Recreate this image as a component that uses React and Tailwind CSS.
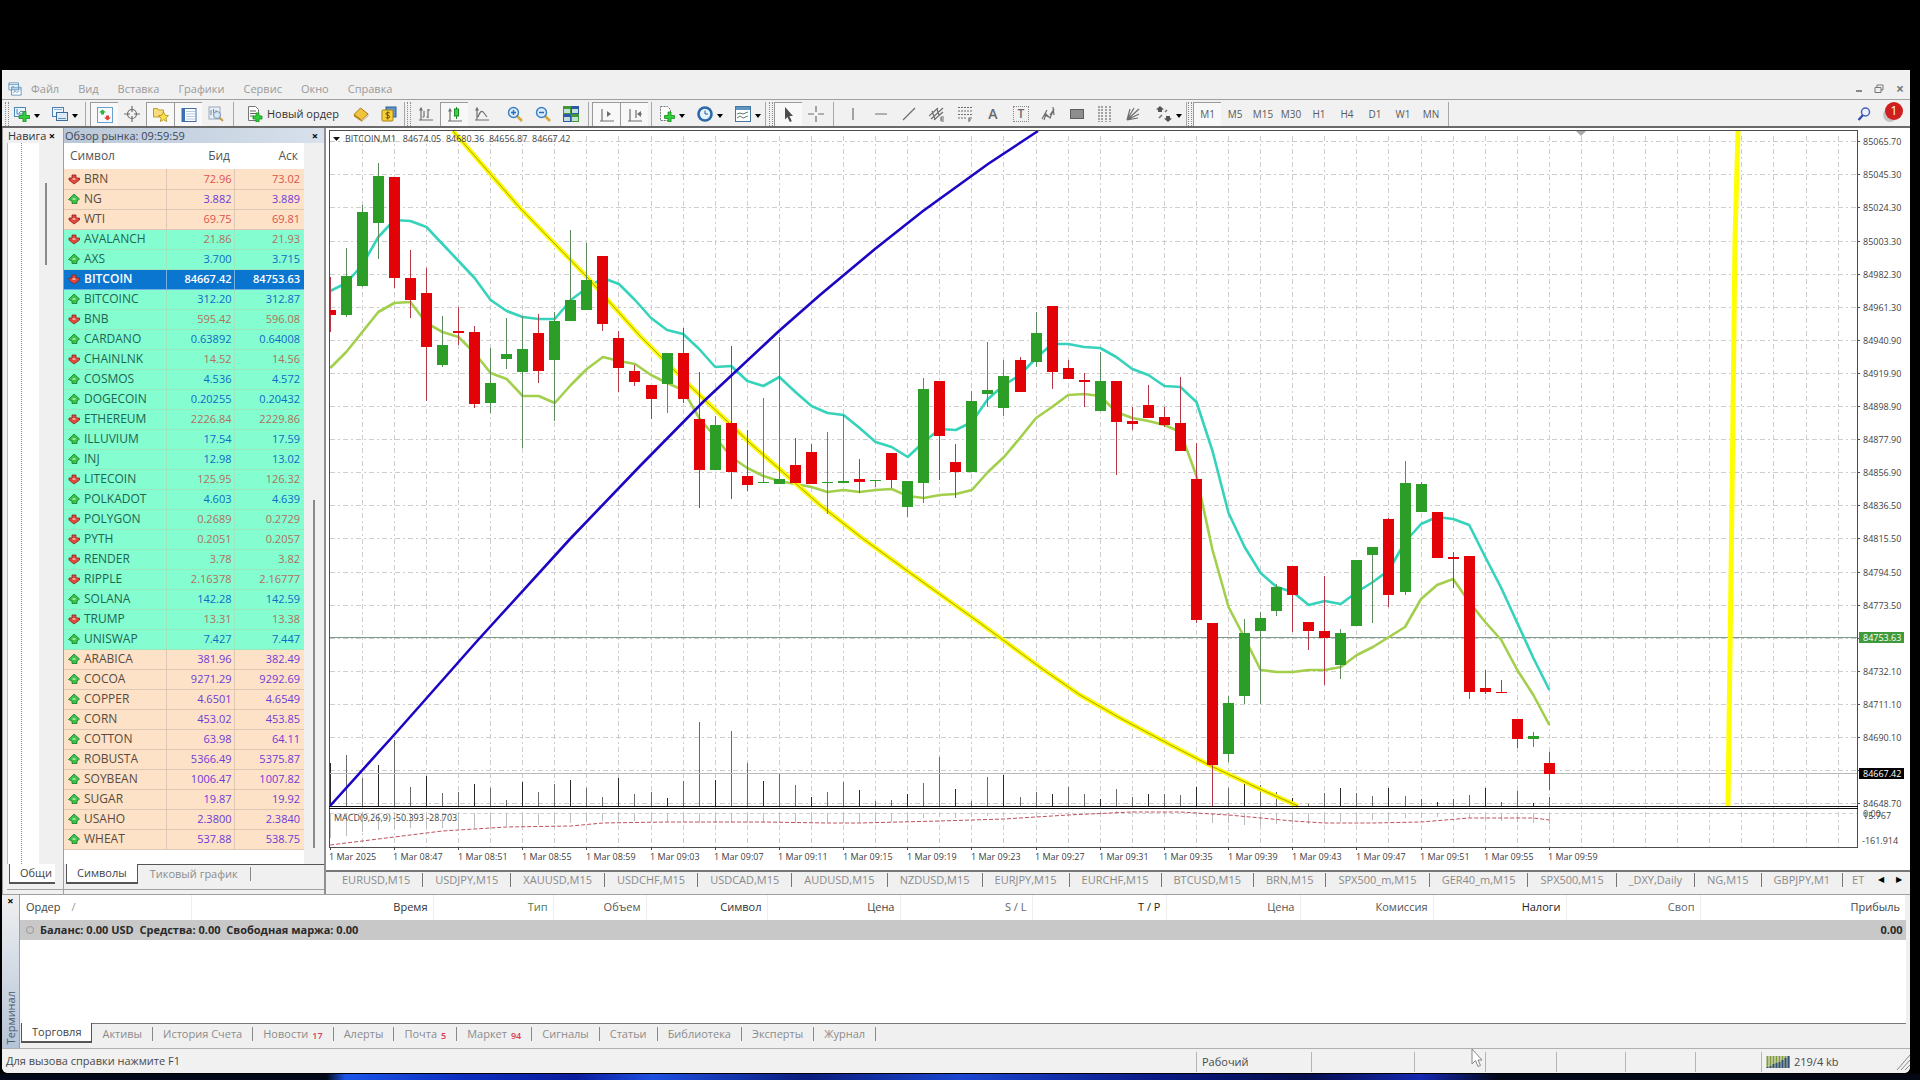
const menuItems = ['Файл', 'Вид', 'Вставка', 'Графики', 'Сервис', 'Окно', 'Справка'];

// name, bid, ask, direction, group
const symbols = [
    ['BRN', '72.96', '73.02', 'down', 'peach'],
    ['NG', '3.882', '3.889', 'up', 'peach'],
    ['WTI', '69.75', '69.81', 'down', 'peach'],
    ['AVALANCH', '21.86', '21.93', 'down', 'mint'],
    ['AXS', '3.700', '3.715', 'up', 'mint'],
    ['BITCOIN', '84667.42', '84753.63', 'down', 'active'],
    ['BITCOINC', '312.20', '312.87', 'up', 'mint'],
    ['BNB', '595.42', '596.08', 'down', 'mint'],
    ['CARDANO', '0.63892', '0.64008', 'up', 'mint'],
    ['CHAINLNK', '14.52', '14.56', 'down', 'mint'],
    ['COSMOS', '4.536', '4.572', 'up', 'mint'],
    ['DOGECOIN', '0.20255', '0.20432', 'up', 'mint'],
    ['ETHEREUM', '2226.84', '2229.86', 'down', 'mint'],
    ['ILLUVIUM', '17.54', '17.59', 'up', 'mint'],
    ['INJ', '12.98', '13.02', 'up', 'mint'],
    ['LITECOIN', '125.95', '126.32', 'down', 'mint'],
    ['POLKADOT', '4.603', '4.639', 'up', 'mint'],
    ['POLYGON', '0.2689', '0.2729', 'down', 'mint'],
    ['PYTH', '0.2051', '0.2057', 'down', 'mint'],
    ['RENDER', '3.78', '3.82', 'down', 'mint'],
    ['RIPPLE', '2.16378', '2.16777', 'down', 'mint'],
    ['SOLANA', '142.28', '142.59', 'up', 'mint'],
    ['TRUMP', '13.31', '13.38', 'down', 'mint'],
    ['UNISWAP', '7.427', '7.447', 'up', 'mint'],
    ['ARABICA', '381.96', '382.49', 'up', 'peach'],
    ['COCOA', '9271.29', '9292.69', 'up', 'peach'],
    ['COPPER', '4.6501', '4.6549', 'up', 'peach'],
    ['CORN', '453.02', '453.85', 'up', 'peach'],
    ['COTTON', '63.98', '64.11', 'up', 'peach'],
    ['ROBUSTA', '5366.49', '5375.87', 'up', 'peach'],
    ['SOYBEAN', '1006.47', '1007.82', 'up', 'peach'],
    ['SUGAR', '19.87', '19.92', 'up', 'peach'],
    ['USAHO', '2.3800', '2.3840', 'up', 'peach'],
    ['WHEAT', '537.88', '538.75', 'up', 'peach'],
];

const rowStyles = {
    peach: { row: 'bg-[#fde2c8] text-[#5a4a3c]', cell: 'border-[#dcc8b4]', up: 'text-[#6d3bd6]', down: 'text-[#e0524e]' },
    mint: { row: 'bg-[#84fdd0] text-[#1d6650]', cell: 'border-[#9be6bd]', up: 'text-[#1169c8]', down: 'text-[#b2705c]' },
    active: { row: 'bg-[#0b76d0] text-white', cell: 'border-[#6fb0e6]', up: 'text-white', down: 'text-white' },
};

const chartTabs = [
    'EURUSD,M15', 'USDJPY,M15', 'XAUUSD,M15', 'USDCHF,M15', 'USDCAD,M15', 'AUDUSD,M15', 'NZDUSD,M15', 'EURJPY,M15',
    'EURCHF,M15', 'BTCUSD,M15', 'BRN,M15', 'SPX500_m,M15', 'GER40_m,M15', 'SPX500,M15', '_DXY,Daily', 'NG,M15', 'GBPJPY,M1',
];

const orderColumns = [
    ['Время', 'w-[242px]', 'text-[#333]'],
    ['Тип', 'w-[120px]', 'text-[#4a7a50]'],
    ['Объем', 'w-[93px]', 'text-[#555]'],
    ['Символ', 'w-[121px]', 'text-[#333]'],
    ['Цена', 'w-[133px]', 'text-[#444]'],
    ['S / L', 'w-[132px]', 'text-[#666]'],
    ['T / P', 'w-[134px]', 'text-[#222]'],
    ['Цена', 'w-[134px]', 'text-[#555]'],
    ['Комиссия', 'w-[133px]', 'text-[#555]'],
    ['Налоги', 'w-[133px]', 'text-[#222]'],
    ['Своп', 'w-[134px]', 'text-[#666]'],
    ['Прибыль', '', 'text-[#444]'],
];

const terminalTabs = [
    ['Активы'], ['История Счета'], ['Новости', '17'], ['Алерты'], ['Почта', '5'], ['Маркет', '94'],
    ['Сигналы'], ['Статьи'], ['Библиотека'], ['Эксперты'], ['Журнал'],
];

const timeframes = ['M1', 'M5', 'M15', 'M30', 'H1', 'H4', 'D1', 'W1', 'MN'];

// direction, high, body top, body bottom, low
const candles = [
    ['r', 277, 310, 315, 332], ['g', 248, 276, 315, 317], ['g', 205, 212, 286, 287], ['g', 163, 176, 223, 259],
    ['r', 177, 177, 278, 288], ['r', 250, 278, 300, 318], ['r', 268, 293, 347, 401], ['g', 316, 345, 365, 367],
    ['r', 307, 331, 333, 345], ['r', 326, 332, 404, 408], ['g', 348, 383, 403, 413], ['g', 318, 354, 359, 369],
    ['g', 316, 349, 372, 448], ['r', 314, 333, 371, 383], ['g', 312, 321, 360, 421], ['g', 230, 300, 321, 321],
    ['g', 243, 280, 310, 310], ['r', 256, 256, 324, 331], ['r', 331, 338, 368, 392], ['r', 365, 371, 382, 386],
    ['r', 385, 385, 399, 419], ['g', 353, 353, 384, 413], ['r', 328, 353, 399, 403], ['r', 372, 419, 470, 508],
    ['g', 416, 425, 470, 470], ['r', 346, 423, 472, 499], ['r', 430, 476, 485, 491], ['g', 398, 482, 483, 483],
    ['g', 337, 479, 484, 484], ['r', 438, 465, 483, 483], ['r', 444, 452, 484, 484], ['g', 432, 482, 483, 514],
    ['g', 415, 481, 483, 483], ['r', 459, 479, 482, 493], ['g', 480, 480, 481, 487], ['r', 453, 453, 480, 488],
    ['g', 481, 481, 507, 517], ['g', 378, 389, 483, 503], ['r', 381, 381, 436, 480], ['r', 444, 462, 472, 498],
    ['g', 391, 401, 472, 472], ['g', 342, 390, 394, 407], ['g', 360, 376, 408, 416], ['r', 357, 360, 392, 392],
    ['g', 312, 333, 362, 367], ['r', 306, 306, 372, 389], ['r', 360, 368, 379, 379], ['r', 373, 380, 382, 407],
    ['g', 352, 381, 411, 411], ['r', 381, 381, 422, 475], ['r', 407, 421, 424, 430], ['r', 385, 405, 418, 418],
    ['r', 407, 417, 425, 427], ['r', 377, 423, 451, 451], ['r', 443, 479, 620, 623], ['r', 623, 623, 765, 806],
    ['g', 696, 703, 754, 762], ['g', 619, 633, 696, 704], ['g', 612, 618, 631, 704], ['g', 584, 587, 611, 616],
    ['r', 566, 566, 595, 632], ['r', 622, 622, 631, 650], ['r', 576, 631, 638, 685], ['g', 629, 633, 665, 679],
    ['g', 560, 560, 626, 626], ['g', 547, 547, 555, 623], ['r', 518, 519, 595, 607], ['g', 461, 483, 592, 595],
    ['g', 482, 484, 512, 512], ['r', 512, 512, 558, 558], ['r', 552, 557, 559, 588], ['r', 556, 556, 692, 699],
    ['r', 670, 688, 692, 694], ['r', 680, 692, 693, 693], ['r', 719, 719, 739, 748], ['g', 732, 736, 739, 747],
    ['r', 752, 763, 774, 790],
];

const fastAverage = [
    291, 283, 265, 237, 220, 221, 227, 244, 261, 278, 300, 311, 317, 319, 319, 300, 288, 278, 284, 300, 318, 330, 334, 349, 367, 366,
    381, 386, 377, 392, 406, 413, 415, 428, 442, 447, 457, 442, 429, 430, 422, 399, 385, 375, 358, 344, 344, 347, 348, 357, 369, 375,
    386, 387, 402, 451, 513, 547, 573, 587, 592, 605, 601, 604, 592, 582, 570, 542, 524, 517, 519, 525, 557, 588, 623, 658, 690,
];

const slowAverage = [
    368, 352, 332, 312, 303, 302, 323, 332, 337, 353, 373, 379, 396, 396, 403, 385, 369, 357, 361, 364, 375, 383, 390, 418, 437, 457,
    468, 476, 481, 484, 487, 492, 490, 492, 490, 489, 496, 498, 495, 494, 490, 472, 457, 438, 418, 407, 395, 394, 396, 412, 418, 421,
    425, 432, 476, 550, 607, 638, 670, 672, 672, 670, 670, 667, 655, 647, 637, 627, 599, 585, 579, 602, 622, 640, 670, 695, 725,
];

const volumes = [
    763, 755, 778, 765, 740, 787, 776, 793, 792, 784, 788, 800, 782, 792, 784, 780, 788, 797, 778, 794, 792, 798, 781, 722, 780, 731,
    763, 781, 773, 785, 797, 792, 782, 790, 801, 800, 794, 783, 757, 789, 801, 777, 775, 797, 792, 794, 787, 794, 799, 789, 797, 794,
    794, 795, 787, 766, 788, 782, 785, 792, 798, 804, 793, 788, 793, 796, 788, 796, 799, 802, 799, 795, 788, 802, 791, 803, 797,
];

const macdBars = [
    838, 836, 832, 830, 829, 828, 828, 828, 828, 828, 827, 826, 825, 825, 824, 823, 822, 821, 821, 821, 822, 822, 822, 823, 823, 823,
    823, 823, 823, 823, 823, 823, 823, 823, 822, 822, 820, 818, 817, 818, 817, 816, 815, 814, 814, 814, 812, 812, 811, 811, 811, 812,
    812, 813, 815, 823, 823, 825, 825, 824, 824, 824, 823, 822, 821, 820, 820, 818, 818, 817, 817, 818, 820, 821, 822, 823, 824,
];

const macdSignal = [
    [0, 845], [2, 841], [4, 837], [7, 831], [11, 827], [15, 826], [17, 823], [21, 822], [27, 822], [31, 823], [33, 823], [38, 821],
    [42, 819], [46, 815], [50, 812], [53, 812], [56, 815], [58, 818], [60, 821], [62, 823], [65, 823], [68, 822], [71, 818], [75, 818], [76, 820],
];

const priceLabels = [
    '85065.70', '85045.30', '85024.30', '85003.30', '84982.30', '84961.30', '84940.90', '84919.90', '84898.90', '84877.90', '84856.90',
    '84836.50', '84815.50', '84794.50', '84773.50', null, '84732.10', '84711.10', '84690.10', null, '84648.70',
];

const barX = (i) => 330.2 + i * 16.042;
const gridY = (i) => Math.round(141.2 + i * 33.1) + 0.5;
const toPoints = (values) => values.map((y, i) => `${barX(i)},${y}`).join(' ');

const timeLabels = Array.from({ length: 20 }, (_, i) => {
    if (i === 0) return '1 Mar 2025';
    const minutes = 8 * 60 + 43 + i * 4;
    return `1 Mar 0${Math.floor(minutes / 60)}:${String(minutes % 60).padStart(2, '0')}`;
});

const yellowCurve = '453,131 520,208 587,277 640,336 687,383 750,443 820,505 862,538 920,580 980,623 1041,668 1080,695 1120,718 1165,742 1213,767 1260,789 1298,806';
const blueCurve = '330,806 394,735 478,640 570,539 640,466 703,402 779,331 820,295 875,249 923,211 988,164 1038,131';

function Chart() {
    return (
        <svg viewBox="326 128 1584 742" className="block w-full h-auto bg-white font-['Open_Sans','Noto_Sans',sans-serif] text-[9px]">
            <g stroke="#cdcdcd" strokeWidth="1" strokeDasharray="5 3 2 3" shapeRendering="crispEdges">
                {priceLabels.map((_, i) => <line key={i} x1="330" x2="1857" y1={gridY(i)} y2={gridY(i)} />)}
                {Array.from({ length: 47 }, (_, i) => (
                    <line key={i} x1={barX(2 + i * 2)} x2={barX(2 + i * 2)} y1="136" y2="847" />
                ))}
            </g>
            <line x1="330" x2="1857" y1="813.5" y2="813.5" stroke="#d2d2d2" strokeDasharray="4 3" />

            <g shapeRendering="crispEdges">
                {volumes.map((y, i) => (
                    <line key={i} x1={barX(i)} x2={barX(i)} y1={y} y2="806" stroke={i % 3 ? '#6a6a6a' : '#2c2c2c'} />
                ))}
                {macdBars.map((y, i) => <line key={i} x1={barX(i)} x2={barX(i)} y1="813" y2={y} stroke="#bdbdbd" />)}
            </g>
            <polyline points={macdSignal.map(([i, y]) => `${barX(i)},${y}`).join(' ')} fill="none" stroke="#c0505e" strokeDasharray="4 2" />

            <line x1="330" x2="1857" y1="637.5" y2="637.5" stroke="#7f9a86" shapeRendering="crispEdges" />
            <line x1="330" x2="1857" y1="773.5" y2="773.5" stroke="#b9b9b9" shapeRendering="crispEdges" />

            <polyline points={toPoints(slowAverage)} fill="none" stroke="#a2cf4c" strokeWidth="2.6" strokeLinejoin="round" />
            <polyline points={toPoints(fastAverage)} fill="none" stroke="#35d3bb" strokeWidth="2.6" strokeLinejoin="round" />
            <polyline points={yellowCurve} fill="none" stroke="#fbfb00" strokeWidth="4.5" />
            <polyline points={yellowCurve} fill="none" stroke="#9a8a00" strokeWidth="0.8" />

            {candles.map(([dir, high, top, bottom, low], i) => (
                <g key={i} shapeRendering="crispEdges">
                    <line x1={barX(i)} x2={barX(i)} y1={high} y2={low} stroke={dir === 'g' ? '#5c8a5c' : '#b03a48'} />
                    <rect
                        x={i === 0 ? 330 : Math.round(barX(i) - 5.5)}
                        y={top}
                        width={i === 0 ? 6 : 11}
                        height={bottom - top}
                        fill={dir === 'g' ? '#2c9e28' : '#e30208'}
                    />
                </g>
            ))}

            <polyline points={blueCurve} fill="none" stroke="#1c06c4" strokeWidth="2.6" />
            <polyline points="1738,131 1735,240 1732,500 1728,806" fill="none" stroke="#ffff00" strokeWidth="5" />
            <path d="M1576 131h10l-5 5z" fill="#a9a9a9" />

            {/* frame */}
            <g stroke="#4d4d4d" fill="none" shapeRendering="crispEdges">
                <path d="M329.5 847V130.5H1857.5V848" />
                <path d="M329 847.5H1858" />
                <path d="M329 806.5H1858M329 808.5H1858" stroke="#111" />
                {timeLabels.map((_, i) => <line key={i} x1={barX(i * 4)} x2={barX(i * 4)} y1="847" y2="850" />)}
                {priceLabels.map((_, i) => <line key={i} x1="1857" x2="1860" y1={gridY(i)} y2={gridY(i)} />)}
            </g>

            <g fill="#3f3f3f">
                <path d="M333 137h7l-3.500 4z" fill="#111" />
                <text x="345" y="142">BITCOIN,M1&#160;&#160; 84674.05&#160; 84680.36&#160; 84656.87&#160; 84667.42</text>
                <text x="334" y="821">MACD(9,26,9) -50.393 -28.703</text>
                {timeLabels.map((label, i) => <text key={label} x={Math.round(barX(i * 4)) - 1} y="860">{label}</text>)}
                {priceLabels.map((label, i) => label && <text key={label} x="1863" y={gridY(i) + 3.5}>{label}</text>)}
                <text x="1863" y="817">0.00</text>
                <text x="1863" y="819">15.767</text>
                <text x="1862" y="844">-161.914</text>
            </g>
            <rect x="1859" y="632" width="45" height="11" fill="#3f9a3c" />
            <rect x="1859" y="768" width="45" height="11" fill="#000" />
            <g fill="#fff">
                <text x="1863" y="641">84753.63</text>
                <text x="1863" y="777">84667.42</text>
            </g>
        </svg>
    );
}

const glyph = { fill: 'none', stroke: '#6e6e6e', strokeWidth: 1.2 };

const icons = {
    newChart: (
        <>
            <rect x="0.500" y="1.500" width="11" height="9" fill="#eaf3fb" stroke="#4a86b8" />
            <path d="M3 3v5h6M5 7l2-2 2 1" fill="none" stroke="#4a86b8" />
            <path d="M9 5.500h3v4h4v3h-4v3.500H9v-3.500H5v-3h4z" fill="#2fd03a" stroke="#168a20" strokeWidth="0.8" />
        </>
    ),
    profiles: (
        <>
            <rect x="0.500" y="1.500" width="11" height="9" fill="#eef6fc" stroke="#4a7fb0" />
            <path d="M2 3.500h8" stroke="#8ab4d8" />
            <rect x="4.500" y="6.500" width="11" height="8" fill="#dcebf7" stroke="#3c6d9c" />
            <path d="M6 12.500h8" stroke="#5c8fbd" />
        </>
    ),
    market: (
        <>
            <rect x="0.500" y="0.500" width="15" height="15" fill="#f7fbff" stroke="#6aa0cc" />
            <path d="M5.500 2.500l3.500 3H7v2H4v-2H2z" fill="#2bb534" />
            <path d="M10.500 13.500l-3.500-3h2v-2h3v2h2z" fill="#e0402e" />
        </>
    ),
    crosshair: (
        <g {...glyph}>
            <circle cx="8" cy="8" r="4.500" />
            <path d="M8 0v6M8 10v6M0 8h6M10 8h6" />
        </g>
    ),
    navigator: (
        <>
            <path d="M0.500 1.500h4l1 1.500h5v7h-10z" fill="#f8dc7c" stroke="#c79a25" />
            <path d="M10.500 5l1.500 3.200 3.500.4-2.600 2.300.8 3.600-3.200-1.800-3.200 1.800.8-3.600L5.500 8.600l3.500-.4z" fill="#fbe34e" stroke="#b28e10" strokeWidth="0.8" />
        </>
    ),
    terminal: (
        <>
            <rect x="1" y="1.500" width="14" height="13" fill="#fff" stroke="#3e6fa5" />
            <rect x="1" y="1.500" width="3" height="13" fill="#3f6fae" />
            <path d="M5 4.500h9M5 7h9M5 9.500h9M5 12h9" stroke="#9dbfe0" strokeWidth="0.8" />
        </>
    ),
    tester: (
        <>
            <rect x="1" y="1" width="11" height="12" fill="#e8eff6" stroke="#9aaabb" />
            <path d="M3 4v5M5.500 3v4M8 4v6" stroke="#70859b" />
            <circle cx="9" cy="9" r="3.500" fill="#d5e6f5" stroke="#7893ad" />
            <path d="M11.500 11.500L15 15" stroke="#c2a14a" strokeWidth="2" />
        </>
    ),
    order: (
        <>
            <path d="M1.500.5h7l3 3v11h-10z" fill="#fff" stroke="#777" />
            <path d="M3 5h6M3 7.500h6M3 10h4" stroke="#666" />
            <path d="M9 7h3v3h3v3h-3v3H9v-3H6v-3h3z" fill="#2fd03a" stroke="#168a20" strokeWidth="0.8" />
        </>
    ),
    editor: (
        <>
            <path d="M1 8.500L7.500 2 15 8l-6.500 6z" fill="#f0c43c" stroke="#a9791a" />
            <path d="M1 8.500l7.500 5.500v1.500L1 10.500z" fill="#b98218" />
            <path d="M8.500 14L15 8v1.800l-6.500 5.700z" fill="#fff6d2" stroke="#a9791a" strokeWidth="0.6" />
        </>
    ),
    trading: (
        <>
            <rect x="5" y="1" width="10" height="10" fill="#5f93cf" stroke="#2e5d94" />
            <rect x="1" y="4" width="11" height="11" rx="1" fill="#f7d03a" stroke="#a98212" />
            <path d="M8.800 7c-1-1-4-.8-4 .9 0 1.800 4 1 4 2.800 0 1.600-3 1.800-4.200.6M6.700 5.500v8" fill="none" stroke="#6b5000" />
        </>
    ),
    bars: <path {...glyph} d="M3 3v11h12M3 14H1M3 2l-1 2h2zM6 5v6M6 11H4.500M10 3v9M10 4h2M10 11H8.500" />,
    candlesIcon: (
        <>
            <path {...glyph} d="M3 3v11h12M3 14H1M3 2l-1 2h2z" />
            <path d="M9.500 0v12" stroke="#1a8a24" />
            <rect x="7.500" y="2" width="4" height="7" fill="#3fd04a" stroke="#1a8a24" />
        </>
    ),
    line: <path {...glyph} d="M3 3v11h12M3 14H1M3 2l-1 2h2zM4 11c2-6 4-7 6-4l3 4" />,
    zoomIn: (
        <>
            <path d="M10 10l5 5" stroke="#d5ab35" strokeWidth="2.600" />
            <circle cx="6.500" cy="6.500" r="5" fill="#d9ecfb" stroke="#3a7fc4" strokeWidth="1.400" />
            <path d="M4 6.500h5M6.500 4v5" stroke="#2b6cb0" strokeWidth="1.400" />
        </>
    ),
    zoomOut: (
        <>
            <path d="M10 10l5 5" stroke="#d5ab35" strokeWidth="2.600" />
            <circle cx="6.500" cy="6.500" r="5" fill="#d9ecfb" stroke="#3a7fc4" strokeWidth="1.400" />
            <path d="M4 6.500h5" stroke="#2b6cb0" strokeWidth="1.400" />
        </>
    ),
    tile: (
        <>
            <path d="M0 0h8v8H0zM8 8h8v8H8z" fill="#3f9a36" />
            <path d="M8 0h8v8H8zM0 8h8v8H0z" fill="#2c5aa8" />
            <path d="M1 3h6v4H1zM9 3h6v4H9zM1 11h6v4H1zM9 11h6v4H9z" fill="#c4e0d8" />
        </>
    ),
    scroll: (
        <>
            <path {...glyph} d="M3 2v12h12M3 14H1" />
            <path d="M8 4l4 3-4 3z" fill="#6e6e6e" />
        </>
    ),
    shift: (
        <>
            <path {...glyph} d="M3 2v12h12M3 14H1M9 3v8M15 7h-3" />
            <path d="M14 4v6l-4-3z" fill="#6e6e6e" />
        </>
    ),
    indicators: (
        <>
            <path d="M1.500.5h7l3 3v11h-10z" fill="#fff" stroke="#777" strokeDasharray="2 1" />
            <path d="M9 6h3v3.500h3.500v3H12V16H9v-3.500H5.500v-3H9z" fill="#2fd03a" stroke="#168a20" strokeWidth="0.8" />
        </>
    ),
    clock: (
        <>
            <circle cx="8" cy="8" r="7.800" fill="#2d69a8" />
            <circle cx="8" cy="8" r="5.200" fill="#e6f2fb" />
            <path d="M8 4.500V8h3" fill="none" stroke="#2d5d90" />
        </>
    ),
    template: (
        <>
            <rect x="0.500" y="0.500" width="15" height="15" fill="#fff" stroke="#47779f" />
            <path d="M1 2.500h14" stroke="#5f95c2" strokeWidth="3" />
            <path d="M2 8l3-1 3 1 5-2M2 12l3-2 3 2 5-2" fill="none" stroke="#5b7d6a" />
        </>
    ),
    cursor: <path d="M4 0l8 9H8.500l2.300 5.200-2 .8L6.500 10 4 12.500z" fill="#4c4c4c" />,
    cross: <path {...glyph} d="M8 0v6M8 10v6M0 8h6M10 8h6" />,
    vline: <path {...glyph} d="M8 2v12" />,
    hline: <path {...glyph} d="M2 8h12" />,
    trend: <path {...glyph} d="M2 14L14 2" />,
    channel: <path {...glyph} d="M0 10l9-8M2 13L14 2M5 14l9-8M3 5l3 8M8 3l2 6M12 11h3M12 13h3M12 15h3M12 11v4" />,
    fibo: (
        <>
            <path {...glyph} strokeDasharray="2 1" d="M1 1.500h14M1 5h14M1 8.500h14M1 12h8" />
            <path {...glyph} d="M12 16v-4h3M12 14h2" />
        </>
    ),
    measure: <path {...glyph} d="M1 13l5-9M3 14l2-6 4 4 4-9M9 9l4-6M3 9l5 2M12 1l1 8" />,
    rect: <rect x="1.500" y="3.500" width="13" height="9" fill="#8e8e8e" stroke="#5d5d5d" />,
    cycles: <path {...glyph} strokeDasharray="2 1" d="M2 0v16M5 0v16M9 0v16M13 0v16" />,
    fan: <path {...glyph} d="M2 14L5 3M2 14L9 2M2 14L14 3M2 14l12-6M2 14l11-2" />,
    arrows: (
        <>
            <path d="M4 0l4 3.500-2 .2V6h-4V3.700L0 3.500z" fill="#555" />
            <path d="M12 16l-4-3.500 2-.2V10h4v2.300l2 .2z" fill="#555" />
            <path d="M3 12l3-3M9 6l2-2" stroke="#777" strokeWidth="1.600" />
        </>
    ),
};

function Icon({ name }) {
    return <svg viewBox="0 0 16 16" className="w-4 h-4 shrink-0" aria-hidden="true">{icons[name]}</svg>;
}

function ToolButton({ name, pressed }) {
    return (
        <button
            aria-label={name}
            className={`flex w-7 h-6 shrink-0 items-center justify-center ${pressed ? 'border-t border-l border-[#9a9a9a] bg-[#f8f8f8]' : ''}`}
        >
            <Icon name={name} />
        </button>
    );
}

function MenuButton({ name }) {
    return (
        <button aria-label={name} className="flex w-[34px] h-6 shrink-0 items-center pl-1">
            <Icon name={name} />
            <span className="ml-1 mt-1 w-0 border-x-3 border-t-4 border-x-transparent border-t-black" />
        </button>
    );
}

function Separator() {
    return <span className="mx-[3px] h-6 w-px shrink-0 bg-[#a8a8a8]" />;
}

function Grip() {
    return <span className="mx-px h-6 w-1 shrink-0 border-x border-dotted border-[#8a8a8a]" />;
}

function Toolbar() {
    return (
        <div className="flex h-[29px] items-center overflow-hidden border-t border-[#a0a0a0] border-b-2 border-b-[#6a6a6a] bg-[#f1f1f1] pl-[2px] pt-[2px]">
            <Grip />
            <MenuButton name="newChart" />
            <span className="w-1" />
            <MenuButton name="profiles" />
            <Separator />
            <span className="w-px" />
            <ToolButton name="market" pressed />
            <ToolButton name="crosshair" />
            <ToolButton name="navigator" pressed />
            <ToolButton name="terminal" pressed />
            <ToolButton name="tester" />
            <Separator />
            <button className="flex h-6 w-[110px] shrink-0 items-center gap-1 pl-[10px] text-[11px] text-[#333]">
                <Icon name="order" />
                <span className="whitespace-nowrap">Новый ордер</span>
            </button>
            <ToolButton name="editor" />
            <ToolButton name="trading" />
            <span className="mx-px h-6 w-px bg-[#a8a8a8]" />
            <Grip />
            <ToolButton name="bars" />
            <ToolButton name="candlesIcon" pressed />
            <ToolButton name="line" />
            <span className="w-[5px]" />
            <ToolButton name="zoomIn" />
            <ToolButton name="zoomOut" />
            <ToolButton name="tile" />
            <Separator />
            <ToolButton name="scroll" pressed />
            <ToolButton name="shift" pressed />
            <Separator />
            <MenuButton name="indicators" />
            <span className="w-1" />
            <MenuButton name="clock" />
            <span className="w-1" />
            <MenuButton name="template" />
            <span className="h-6 w-px bg-[#a8a8a8] mr-[2px]" />
            <Grip />
            <ToolButton name="cursor" pressed />
            <ToolButton name="cross" />
            <Separator />
            <span className="w-[2px]" />
            <ToolButton name="vline" />
            <ToolButton name="hline" />
            <ToolButton name="trend" />
            <ToolButton name="channel" />
            <ToolButton name="fibo" />
            <button className="w-7 h-6 shrink-0 text-sm font-semibold text-[#6a6a6a]">A</button>
            <button className="flex w-7 h-6 shrink-0 items-center justify-center">
                <span className="h-4 w-4 border border-dotted border-[#888] text-xs font-semibold leading-[14px] text-[#6a6a6a]">T</span>
            </button>
            <ToolButton name="measure" />
            <ToolButton name="rect" />
            <ToolButton name="cycles" />
            <ToolButton name="fan" />
            <span className="w-[5px]" />
            <MenuButton name="arrows" />
            <span className="h-6 w-px bg-[#a8a8a8]" />
            <Grip />
            {timeframes.map((tf) => (
                <button
                    key={tf}
                    className={`w-7 h-6 shrink-0 text-[10px] text-[#5a5a5a] ${tf === 'M1' ? 'border-t border-l border-[#9a9a9a] bg-[#f8f8f8]' : ''}`}
                >
                    {tf}
                </button>
            ))}
            <Separator />
            <button aria-label="Search" className="ml-auto w-7 h-6 flex items-center justify-center">
                <svg viewBox="0 0 16 16" className="w-4 h-4">
                    <circle cx="9.500" cy="6" r="4" fill="#eef3ff" stroke="#4a62b8" strokeWidth="1.500" />
                    <path d="M7 9l-4.500 5" stroke="#3449a8" strokeWidth="2.200" />
                </svg>
            </button>
            <button aria-label="Alerts" className="w-8 h-6 flex items-start justify-center">
                <span className="h-[18px] w-[18px] rounded-full bg-[#cf1f1f] text-xs leading-[18px] text-white shadow-[-4px_4px_0_-2px_#c4c4c4]">1</span>
            </button>
        </div>
    );
}

function DirectionIcon({ dir }) {
    return (
        <svg viewBox="0 0 12 12" className="w-3 h-3">
            {dir === 'up' ? (
                <path d="M6 1l5.500 5L9 8v2.500H4V8L.5 6.500z" fill="#3cc24a" stroke="#177a26" strokeWidth="0.8" />
            ) : (
                <path d="M6 11L1 7V5h3V2h4v3h3.500v2z" fill="#e04a3c" stroke="#8e1f18" strokeWidth="0.8" />
            )}
            <path d="M4.500 5h3v2h-3z" fill="#fff" opacity="0.5" />
        </svg>
    );
}

function MarketWatch() {
    return (
        <section className="flex w-[261px] shrink-0 flex-col border-l border-[#a0a0a0]">
            <header className="flex h-[15px] items-center justify-between bg-linear-to-r from-[#b9c7d8] to-[#d8e1ec] pl-px pr-[6px] text-[11px] leading-[15px] text-[#3c4654]">
                <h2>Обзор рынка: 09:59:59</h2>
                <button aria-label="Close" className="font-bold text-black leading-3">×</button>
            </header>
            <div className="flex grow bg-[#f0f0f0]">
                <div className="w-60 shrink-0 bg-white">
                    <table className="w-full table-fixed">
                        <thead>
                            <tr className="h-[26px] text-xs text-[#555]">
                                <th className="w-[102px] pl-[6px] text-left font-normal">Символ</th>
                                <th className="w-[68px] pr-1 text-right font-normal">Бид</th>
                                <th className="pr-[6px] text-right font-normal">Аск</th>
                            </tr>
                        </thead>
                        <tbody>
                            {symbols.map(([name, bid, ask, dir, group]) => {
                                const style = rowStyles[group];
                                return (
                                    <tr key={name} className={`h-5 ${style.row} ${group === 'active' ? 'font-semibold' : ''}`}>
                                        <td className={`border-b border-r p-0 ${style.cell}`}>
                                            <span className="flex items-center gap-1 pl-1 text-xs leading-[18px]">
                                                <DirectionIcon dir={dir} />
                                                {name}
                                            </span>
                                        </td>
                                        <td className={`border-b border-r p-0 pr-[2px] text-right text-[11px] leading-[18px] ${style.cell} ${style[dir]}`}>{bid}</td>
                                        <td className={`border-b p-0 pr-1 text-right text-[11px] leading-[18px] ${style.cell} ${style[dir]}`}>{ask}</td>
                                    </tr>
                                );
                            })}
                        </tbody>
                    </table>
                </div>
                <div className="flex grow flex-col items-center pb-4">
                    <span className="mt-auto h-[348px] w-[2px] bg-[#8a8a8a]" />
                </div>
            </div>
            <nav className="mb-1 flex h-[26px] items-start border-b border-[#a0a0a0] text-[11px]">
                <button className="ml-[2px] h-5 border-x border-b-2 border-[#555] bg-white px-[10px] text-[#444]">Символы</button>
                <div className="flex grow border-t border-[#555] pt-[2px]">
                    <button className="border-r border-[#888] px-3 leading-[14px] text-[#8c8c8c]">Тиковый график</button>
                </div>
            </nav>
        </section>
    );
}

function NavigatorPanel() {
    return (
        <section className="flex w-[61px] shrink-0 flex-col border-l border-[#a0a0a0] pl-1">
            <header className="flex h-[15px] items-center justify-between pl-px pr-2 text-[11px] leading-[15px] text-[#333]">
                <h2>Навига</h2>
                <button aria-label="Close" className="font-bold text-black leading-3">×</button>
            </header>
            <div className="flex grow">
                <div className="w-8 border-l border-[#bbb] bg-white pl-[13px]">
                    <div className="h-full border-l border-dotted border-[#888]" />
                </div>
                <span className="ml-[6px] mt-10 h-[82px] w-[2px] bg-[#8a8a8a]" />
            </div>
            <div className="mb-1 h-[26px] border-b border-[#a0a0a0] pl-[2px]">
                <button className="block h-5 w-[46px] border-b-2 border-l border-[#555] bg-white pl-[10px] text-left text-[11px] text-[#444]">
                    Общи
                </button>
            </div>
        </section>
    );
}

function ChartTabs() {
    return (
        <nav className="flex h-6 items-start overflow-hidden border-t-2 border-[#777] bg-[#f0f0f0] text-[11px] text-[#8a8a8a]">
            <div className="flex min-w-0 grow overflow-hidden pl-1 pt-px">
                {chartTabs.map((tab) => (
                    <button key={tab} className="shrink-0 border-r border-[#777] px-3 leading-[14px]">{tab}</button>
                ))}
                <button className="shrink-0 pl-[9px] leading-[14px]">ET</button>
            </div>
            <div className="flex w-8 shrink-0 items-center justify-between bg-[#f0f0f0] pr-2 pt-px text-[8px] text-black">
                <button aria-label="Previous">◀</button>
                <button aria-label="Next">▶</button>
            </div>
        </nav>
    );
}

function Terminal() {
    return (
        <section className="flex border-t border-[#a0a0a0]">
            <div className="flex w-[17px] shrink-0 flex-col items-center justify-between bg-linear-to-b from-[#f0f0f0] to-[#b4c4d8] pb-1">
                <button aria-label="Close" className="text-[11px] font-bold leading-3 text-black">×</button>
                <h2 className="rotate-180 text-[11px] leading-[14px] text-[#4c5a6c] [writing-mode:vertical-rl]">Терминал</h2>
            </div>
            <div className="min-w-0 grow border-l border-[#a0a0a0] pr-1">
                <div className="h-[128px] bg-white">
                    <table className="w-full table-fixed text-[11px]">
                        <thead>
                            <tr className="h-[25px]">
                                <th className="w-[171px] border-r border-[#eee] pl-[6px] text-left font-normal text-[#444]">
                                    Ордер <span className="pl-2 text-[#999]">/</span>
                                </th>
                                {orderColumns.map(([label, width, color], i) => (
                                    <th key={i} className={`border-r border-[#eee] pr-[5px] text-right font-normal ${width} ${color}`}>{label}</th>
                                ))}
                            </tr>
                        </thead>
                        <tbody>
                            <tr className="h-5 bg-[#c8c8c8] font-bold text-[#2a2a2a]">
                                <td colSpan="12" className="p-0">
                                    <span className="flex items-center gap-[6px] pl-[6px] leading-[18px]">
                                        <span className="h-2 w-2 rounded-full border border-[#999]" />
                                        <span>Баланс: 0.00 USD&#160; Средства: 0.00&#160; Свободная маржа: 0.00</span>
                                    </span>
                                </td>
                                <td className="p-0 pr-[3px] text-right">0.00</td>
                            </tr>
                        </tbody>
                    </table>
                </div>
                <nav className="flex h-[25px] items-start text-[11px] text-[#8c8c8c]">
                    <button className="ml-px h-5 border-x border-b-2 border-[#555] bg-white px-[10px] text-[#444]">Торговля</button>
                    <div className="flex grow border-t border-[#777] pt-[3px]">
                        {terminalTabs.map(([label, count]) => (
                            <button key={label} className="flex border-r border-[#888] px-[10px] leading-[14px]">
                                {label}
                                {count && <span className="ml-1 pt-1 text-[9px] font-semibold leading-[10px] text-[#d83a55]">{count}</span>}
                            </button>
                        ))}
                    </div>
                </nav>
            </div>
        </section>
    );
}

function StatusBar() {
    return (
        <footer className="flex h-[25px] items-center border-t border-[#b0b0b0] bg-[#f1f1f1] pl-1 pt-px text-[11px] text-[#4a4a4a]">
            <p className="grow">Для вызова справки нажмите F1</p>
            <div className="flex h-5 items-center [&>span]:h-5 [&>span]:border-l [&>span]:border-[#b5b5b5] [&>span]:leading-5">
                <span className="w-[115px] pl-[5px]">Рабочий</span>
                <span className="w-[103px]" />
                <span className="w-[71px]" />
                <span className="w-[71px]" />
                <span className="w-[69px]" />
                <span className="w-[70px]" />
                <span className="w-[66px]" />
                <span className="flex w-[149px] items-center gap-1 pl-1">
                    <svg viewBox="0 0 24 12" className="h-3 w-6">
                        <path d="M1.500 0v12M4.500 0v12M7.500 0v12M10.500 0v12M13.500 0v12M16.500 0v12M19.500 0v12M22.500 0v12" stroke="#7f9a3c" strokeWidth="2" />
                        <path d="M1.500 11v1M4.500 10v2M7.500 8v4M10.500 7v5M13.500 6v6M16.500 4v8M19.500 2v10M22.500 0v12" stroke="#34507c" strokeWidth="2" />
                    </svg>
                    219/4 kb
                    <svg viewBox="0 0 14 16" className="ml-auto h-4 w-[14px]">
                        <path d="M1 16L14 1M5 16l9-10M9 16l5-5" stroke="#888" />
                    </svg>
                </span>
            </div>
        </footer>
    );
}

export default function App() {
    return (
        <div className="relative min-h-screen bg-black pt-[70px] font-['Open_Sans','Noto_Sans',sans-serif]">
            <div className="ml-[2px] mr-[10px] overflow-hidden rounded-b-md bg-[#f0f0f0]">
                <div className="flex h-[29px] items-center pl-[6px] pt-[8px] text-[11px] text-[#9a9a9a]">
                    <svg viewBox="0 0 16 16" className="h-[14px] w-[14px]">
                        <path d="M1 1h11v8H1zM4 6h11v9H4z" fill="#fff" stroke="#5a94be" />
                        <path d="M1 3h11M4 8h11M3 7l2-2 2 1M6 13l2-3 2 2 3-2" fill="none" stroke="#5a94be" />
                    </svg>
                    <nav className="flex grow gap-[19px] pl-[9px]">
                        {menuItems.map((item) => <button key={item} className="leading-4">{item}</button>)}
                    </nav>
                    <div className="flex items-center gap-3 pr-[6px] text-[#777]">
                        <button aria-label="Minimize" className="mt-1 h-[2px] w-[6px] bg-[#888]" />
                        <button aria-label="Restore">
                            <svg viewBox="0 0 10 10" className="h-[10px] w-[10px]">
                                <path d="M3 3V1h6v5H7M1 3.500h6v5H1z" fill="none" stroke="#777" />
                            </svg>
                        </button>
                        <button aria-label="Close window" className="text-sm font-bold leading-3">×</button>
                    </div>
                </div>
                <Toolbar />
                <main className="flex">
                    <NavigatorPanel />
                    <MarketWatch />
                    <div className="min-w-0 grow border-l-2 border-[#8f8f8f]">
                        <Chart />
                        <ChartTabs />
                    </div>
                </main>
                <Terminal />
                <StatusBar />
            </div>
            <div className="absolute inset-x-0 bottom-0 h-[6px] bg-[linear-gradient(90deg,#04091a_0%,#04091a_17%,#1b56e8_18%,#0b2ec0_24%,#0a1c9c_30%,#1d4fe0_34%,#0a1c7c_42%,#1b46d0_50%,#0a1a86_60%,#050d4a_68%,#1428b0_74%,#04091a_78%,#030812_100%)]" />
            <svg viewBox="0 0 12 20" className="absolute left-[76.6%] top-[97%] h-5 w-3">
                <path d="M1 1v15l3.500-3.500L7 18.500l2.500-1L7 12h4z" fill="#fff" stroke="#888" />
            </svg>
        </div>
    );
}
